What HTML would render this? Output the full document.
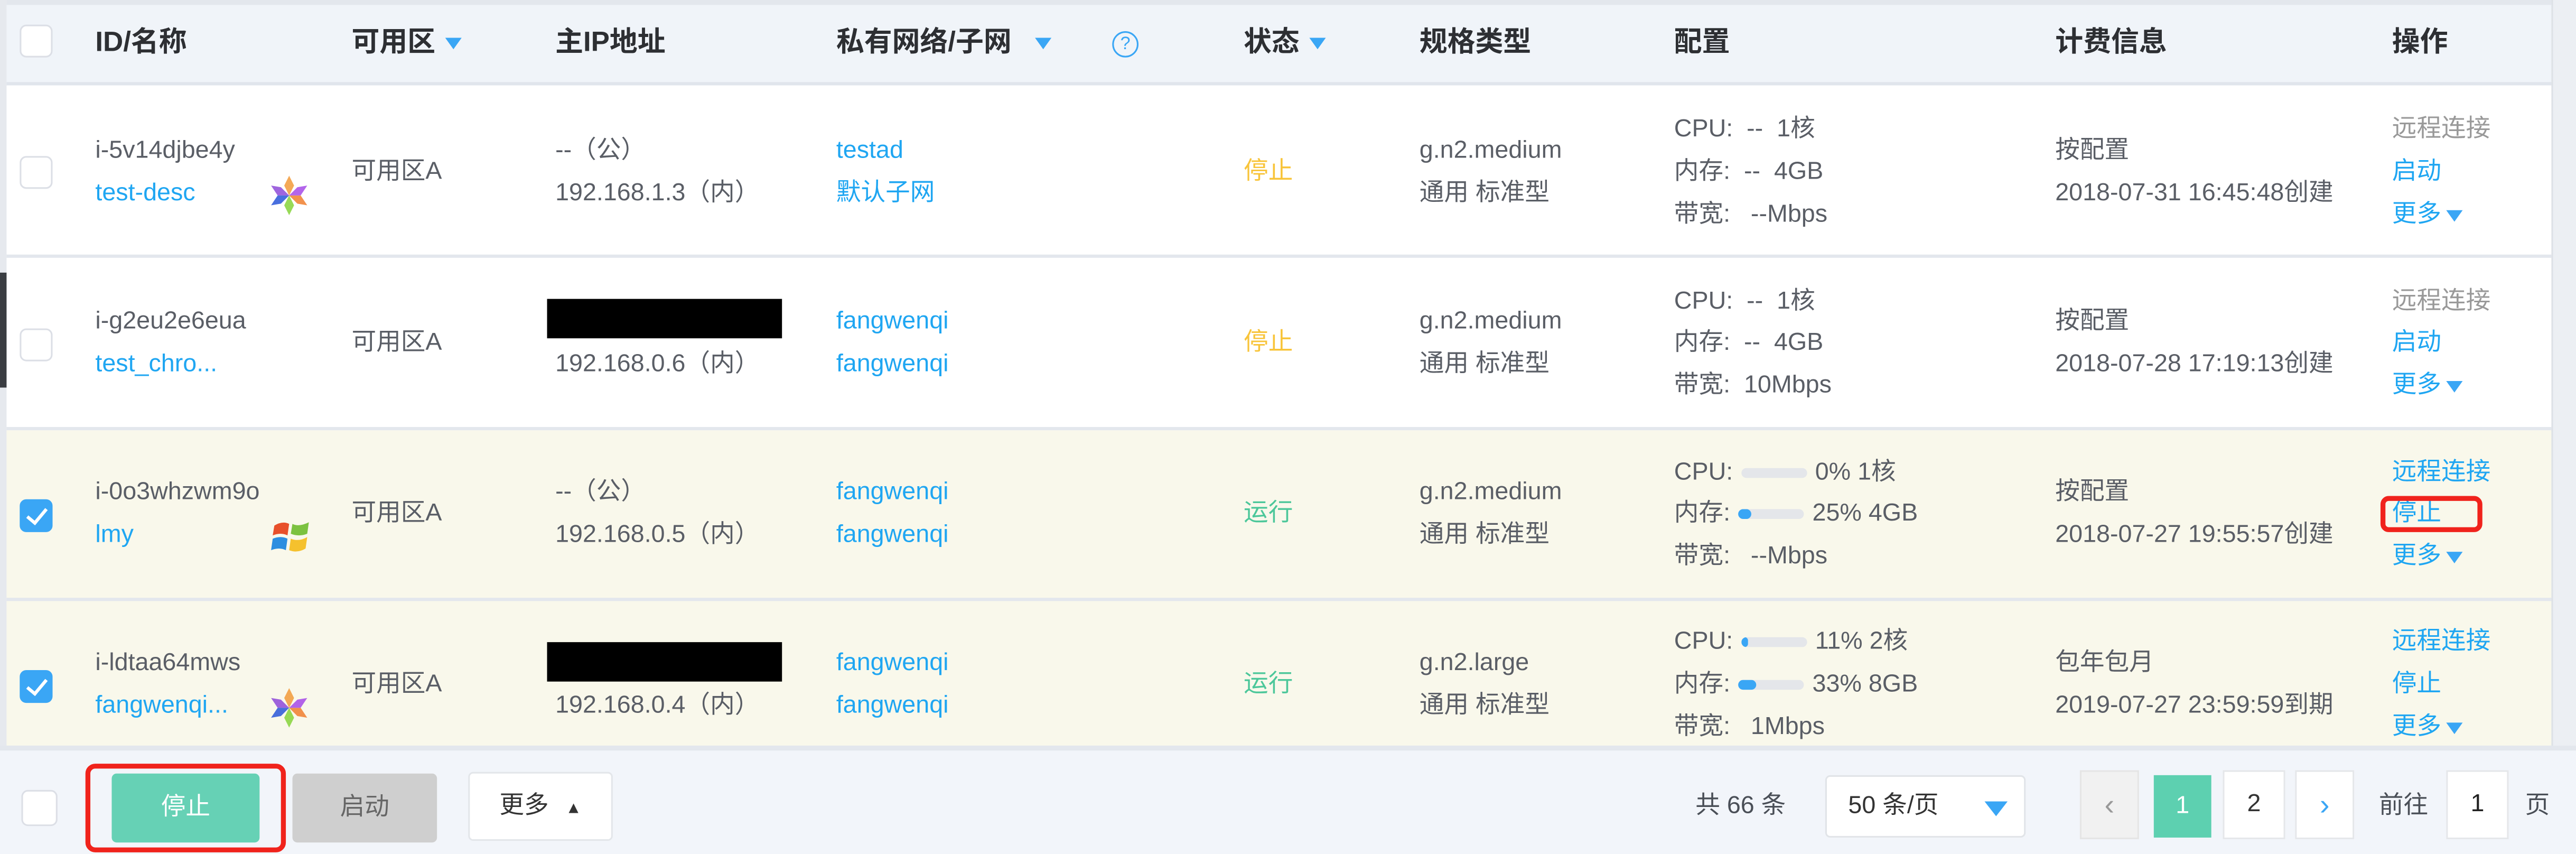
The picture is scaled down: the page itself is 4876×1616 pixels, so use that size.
<!DOCTYPE html>
<html><head><meta charset="utf-8">
<style>
html,body{margin:0;padding:0;width:4876px;height:1616px;overflow:hidden;background:#f2f5fa}
#w{position:absolute;left:0;top:0;width:1568px;height:520px;transform:scale(3.1097,3.1077);transform-origin:0 0;font-family:"Liberation Sans","Noto Sans CJK SC",sans-serif;font-size:15px;color:#5a5e66;background:#f2f5fa}
.a{position:absolute;white-space:nowrap;line-height:18px}
.h{font-weight:bold;color:#2d2f33;font-size:17px}
.b{color:#1fa6f2}
.row{position:absolute;left:4px;width:1549px}
.cb{position:absolute;width:20px;height:20px;border:1px solid #dcdfe6;border-radius:4px;background:#fff;box-sizing:border-box}
.cb.on{background:#3aa6f5;border-color:#3aa6f5}
.cb.on:after{content:"";position:absolute;left:6px;top:2px;width:5px;height:10px;border:solid #fff;border-width:0 2px 2px 0;transform:rotate(40deg)}
.tri{display:inline-block;width:0;height:0;border-left:5px solid transparent;border-right:5px solid transparent;border-top:7px solid #3aa6f5;margin-left:6px;vertical-align:middle}
.bar{display:inline-block;width:40px;height:6px;background:#e4e6ea;border-radius:3px;vertical-align:middle;position:relative;overflow:hidden;margin:0 5px}
.bar i{position:absolute;left:0;top:0;height:6px;background:#3aa6f5;border-radius:3px}
.blk{position:absolute;background:#000}
</style></head><body><div id="w">
<div style="position:absolute;left:0;top:0;width:4px;height:456px;background:#e6e9ee"></div>
<div style="position:absolute;left:0;top:166px;width:5px;height:70px;background:#3a3d42"></div>
<div style="position:absolute;left:1553px;top:0;width:15px;height:456px;background:#eceff3;border-left:1px solid #dde1e6"></div>
<div class="row" style="top:0;height:52px;background:#f0f4f9;border-top:3px solid #e3e7ed;box-sizing:border-box;border-bottom:2px solid #e0e5ec"></div>
<div class="cb" style="left:12px;top:15px"></div>
<div class="a h" style="left:58px;top:17px">ID/名称</div>
<div class="a h" style="left:214px;top:17px">可用区<span class="tri"></span></div>
<div class="a h" style="left:338px;top:17px">主IP地址</div>
<div class="a h" style="left:509px;top:17px">私有网络/子网<span class="tri" style="margin-left:14px"></span></div>
<div style="position:absolute;left:677px;top:19px;width:14px;height:14px;border:1.5px solid #3aa6f5;border-radius:50%;color:#3aa6f5;font-size:11px;line-height:14px;text-align:center">?</div>
<div class="a h" style="left:757px;top:17px">状态<span class="tri"></span></div>
<div class="a h" style="left:864px;top:17px">规格类型</div>
<div class="a h" style="left:1019px;top:17px">配置</div>
<div class="a h" style="left:1251px;top:17px">计费信息</div>
<div class="a h" style="left:1456px;top:17px">操作</div>

<div class="row" style="top:52px;height:105px;background:#fff;border-bottom:2px solid #e3e7ed;box-sizing:border-box"></div>
<div class="cb" style="left:12px;top:95px"></div>
<div class="a" style="left:58px;top:83px">i-5v14djbe4y</div>
<div class="a b" style="left:58px;top:109px">test-desc</div>
<svg class="a" style="left:163px;top:106px" width="26" height="26" viewBox="0 0 26 26"><g opacity=".85"><path d="M13 1L16 7L13 13L10 7Z" fill="#f29b3a"/><path d="M13 13L16 19L13 25L10 19Z" fill="#86d43a"/><path d="M2 7L8 8L13 13L6 13Z" fill="#8f4ad9"/><path d="M24 19L18 18L13 13L20 13Z" fill="#f07f2e"/><path d="M2 19L8 18L13 13L6 13Z" fill="#2a56d9"/><path d="M24 7L18 8L13 13L20 13Z" fill="#a64ae8"/></g></svg>
<div class="a" style="left:214px;top:96px">可用区A</div>
<div class="a" style="left:338px;top:83px">--（公）</div>
<div class="a" style="left:338px;top:109px">192.168.1.3（内）</div>
<div class="a b" style="left:509px;top:83px">testad</div>
<div class="a b" style="left:509px;top:109px">默认子网</div>
<div class="a" style="left:757px;top:96px;color:#f8c43a">停止</div>
<div class="a" style="left:864px;top:83px">g.n2.medium</div>
<div class="a" style="left:864px;top:109px">通用 标准型</div>
<div class="a" style="left:1019px;top:70px">CPU:&nbsp;&nbsp;--&nbsp;&nbsp;1核</div>
<div class="a" style="left:1019px;top:96px">内存:&nbsp;&nbsp;--&nbsp;&nbsp;4GB</div>
<div class="a" style="left:1019px;top:122px">带宽:&nbsp;&nbsp;&nbsp;--Mbps</div>
<div class="a" style="left:1251px;top:83px">按配置</div>
<div class="a" style="left:1251px;top:109px">2018-07-31 16:45:48创建</div>
<div class="a" style="left:1456px;top:70px;color:#999">远程连接</div>
<div class="a b" style="left:1456px;top:96px">启动</div>
<div class="a b" style="left:1456px;top:122px">更多<span class="tri" style="margin-left:3px"></span></div>

<div class="row" style="top:157px;height:105px;background:#fff;border-bottom:2px solid #e3e7ed;box-sizing:border-box"></div>
<div class="cb" style="left:12px;top:200px"></div>
<div class="a" style="left:58px;top:187px">i-g2eu2e6eua</div>
<div class="a b" style="left:58px;top:213px">test_chro...</div>
<div class="a" style="left:214px;top:200px">可用区A</div>
<div class="blk" style="left:333px;top:182px;width:143px;height:24px"></div>
<div class="a" style="left:338px;top:213px">192.168.0.6（内）</div>
<div class="a b" style="left:509px;top:187px">fangwenqi</div>
<div class="a b" style="left:509px;top:213px">fangwenqi</div>
<div class="a" style="left:757px;top:200px;color:#f8c43a">停止</div>
<div class="a" style="left:864px;top:187px">g.n2.medium</div>
<div class="a" style="left:864px;top:213px">通用 标准型</div>
<div class="a" style="left:1019px;top:175px">CPU:&nbsp;&nbsp;--&nbsp;&nbsp;1核</div>
<div class="a" style="left:1019px;top:200px">内存:&nbsp;&nbsp;--&nbsp;&nbsp;4GB</div>
<div class="a" style="left:1019px;top:226px">带宽:&nbsp;&nbsp;10Mbps</div>
<div class="a" style="left:1251px;top:187px">按配置</div>
<div class="a" style="left:1251px;top:213px">2018-07-28 17:19:13创建</div>
<div class="a" style="left:1456px;top:175px;color:#999">远程连接</div>
<div class="a b" style="left:1456px;top:200px">启动</div>
<div class="a b" style="left:1456px;top:226px">更多<span class="tri" style="margin-left:3px"></span></div>

<div class="row" style="top:262px;height:104px;background:#f9f8eb;border-bottom:2px solid #e3e7ed;box-sizing:border-box"></div>
<div class="cb on" style="left:12px;top:304px"></div>
<div class="a" style="left:58px;top:291px">i-0o3whzwm9o</div>
<div class="a b" style="left:58px;top:317px">lmy</div>
<svg class="a" style="left:165px;top:314px" width="24" height="26" viewBox="0 0 24 26"><path d="M2 6Q7 3 11 5L10 12Q6 10 1 12Z" fill="#e8502a"/><path d="M13 5Q17 7 23 4L22 11Q17 13 12 11Z" fill="#7cc240"/><path d="M1 14Q6 12 10 14L9 21Q5 19 0 21Z" fill="#2d8ee0"/><path d="M12 14Q17 16 22 13L21 20Q16 23 11 21Z" fill="#f5c12e"/></svg>
<div class="a" style="left:214px;top:304px">可用区A</div>
<div class="a" style="left:338px;top:291px">--（公）</div>
<div class="a" style="left:338px;top:317px">192.168.0.5（内）</div>
<div class="a b" style="left:509px;top:291px">fangwenqi</div>
<div class="a b" style="left:509px;top:317px">fangwenqi</div>
<div class="a" style="left:757px;top:304px;color:#4cc79a">运行</div>
<div class="a" style="left:864px;top:291px">g.n2.medium</div>
<div class="a" style="left:864px;top:317px">通用 标准型</div>
<div class="a" style="left:1019px;top:279px">CPU:<span class="bar"></span>0% 1核</div>
<div class="a" style="left:1019px;top:304px">内存:<span class="bar"><i style="width:8px"></i></span>25% 4GB</div>
<div class="a" style="left:1019px;top:330px">带宽:&nbsp;&nbsp;&nbsp;--Mbps</div>
<div class="a" style="left:1251px;top:291px">按配置</div>
<div class="a" style="left:1251px;top:317px">2018-07-27 19:55:57创建</div>
<div class="a b" style="left:1456px;top:279px">远程连接</div>
<div class="a b" style="left:1456px;top:304px">停止</div>
<div style="position:absolute;left:1449px;top:302px;width:62px;height:22px;border:3px solid #f0231c;border-radius:5px;box-sizing:border-box"></div>
<div class="a b" style="left:1456px;top:330px">更多<span class="tri" style="margin-left:3px"></span></div>

<div class="row" style="top:366px;height:90px;background:#f9f8eb"></div>
<div class="cb on" style="left:12px;top:408px"></div>
<div class="a" style="left:58px;top:395px">i-ldtaa64mws</div>
<div class="a b" style="left:58px;top:421px">fangwenqi...</div>
<svg class="a" style="left:163px;top:418px" width="26" height="26" viewBox="0 0 26 26"><g opacity=".85"><path d="M13 1L16 7L13 13L10 7Z" fill="#f29b3a"/><path d="M13 13L16 19L13 25L10 19Z" fill="#86d43a"/><path d="M2 7L8 8L13 13L6 13Z" fill="#8f4ad9"/><path d="M24 19L18 18L13 13L20 13Z" fill="#f07f2e"/><path d="M2 19L8 18L13 13L6 13Z" fill="#2a56d9"/><path d="M24 7L18 8L13 13L20 13Z" fill="#a64ae8"/></g></svg>
<div class="a" style="left:214px;top:408px">可用区A</div>
<div class="blk" style="left:333px;top:391px;width:143px;height:24px"></div>
<div class="a" style="left:338px;top:421px">192.168.0.4（内）</div>
<div class="a b" style="left:509px;top:395px">fangwenqi</div>
<div class="a b" style="left:509px;top:421px">fangwenqi</div>
<div class="a" style="left:757px;top:408px;color:#4cc79a">运行</div>
<div class="a" style="left:864px;top:395px">g.n2.large</div>
<div class="a" style="left:864px;top:421px">通用 标准型</div>
<div class="a" style="left:1019px;top:382px">CPU:<span class="bar"><i style="width:4px"></i></span>11% 2核</div>
<div class="a" style="left:1019px;top:408px">内存:<span class="bar"><i style="width:11px"></i></span>33% 8GB</div>
<div class="a" style="left:1019px;top:434px">带宽:&nbsp;&nbsp;&nbsp;1Mbps</div>
<div class="a" style="left:1251px;top:395px">包年包月</div>
<div class="a" style="left:1251px;top:421px">2019-07-27 23:59:59到期</div>
<div class="a b" style="left:1456px;top:382px">远程连接</div>
<div class="a b" style="left:1456px;top:408px">停止</div>
<div class="a b" style="left:1456px;top:434px">更多<span class="tri" style="margin-left:3px"></span></div>
<div style="position:absolute;left:0;top:454px;width:1568px;height:3px;background:#e3e7ed"></div>

<div class="cb" style="left:13px;top:481px;width:22px;height:22px"></div>
<div style="position:absolute;left:52px;top:465px;width:122px;height:54px;border:3px solid #f0231c;border-radius:6px;box-sizing:border-box"></div>
<div style="position:absolute;left:68px;top:471px;width:90px;height:42px;background:#66d1b5;border-radius:3px;color:#fff;text-align:center;line-height:42px">停止</div>
<div style="position:absolute;left:178px;top:471px;width:88px;height:42px;background:#cfcfcf;border-radius:3px;color:#666;text-align:center;line-height:42px">启动</div>
<div style="position:absolute;left:285px;top:470px;width:88px;height:42px;background:#fff;border:1px solid #e3e6ea;border-radius:3px;box-sizing:border-box;color:#333;line-height:40px;padding-left:18px">更多 <span style="font-size:10px;margin-left:6px">▲</span></div>
<div class="a" style="left:1032px;top:482px;color:#4a4f57">共 66 条</div>
<div style="position:absolute;left:1111px;top:472px;width:122px;height:38px;background:#fff;border:1px solid #e1e4e8;border-radius:3px;box-sizing:border-box;color:#333;line-height:36px;padding-left:13px">50 条/页<span style="position:absolute;right:10px;top:15px;width:0;height:0;border-left:7px solid transparent;border-right:7px solid transparent;border-top:9px solid #3aa6f5"></span></div>
<div style="position:absolute;left:1266px;top:469px;width:36px;height:42px;background:#f1f1f1;border:1px solid #e5e5e5;box-sizing:border-box;color:#999;text-align:center;line-height:40px;font-size:18px">‹</div>
<div style="position:absolute;left:1311px;top:472px;width:35px;height:38px;background:#5dd0b0;color:#fff;text-align:center;line-height:38px">1</div>
<div style="position:absolute;left:1353px;top:469px;width:38px;height:42px;background:#fff;border:1px solid #e5e7ea;box-sizing:border-box;color:#333;text-align:center;line-height:40px">2</div>
<div style="position:absolute;left:1397px;top:469px;width:36px;height:42px;background:#fff;border:1px solid #e5e7ea;box-sizing:border-box;color:#3aa6f5;text-align:center;line-height:40px;font-size:18px">›</div>
<div class="a" style="left:1448px;top:482px;color:#4a4f57">前往</div>
<div style="position:absolute;left:1489px;top:469px;width:38px;height:42px;background:#fff;border:1px solid #e5e7ea;box-sizing:border-box;color:#222;text-align:center;line-height:40px">1</div>
<div class="a" style="left:1537px;top:482px;color:#4a4f57">页</div>
</div></body></html>
